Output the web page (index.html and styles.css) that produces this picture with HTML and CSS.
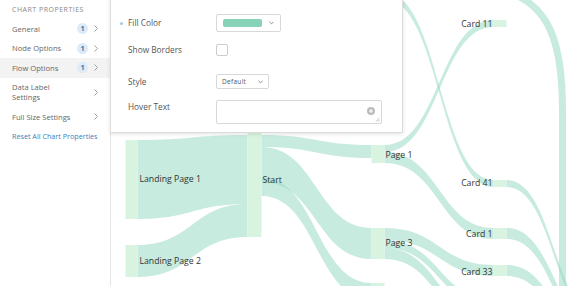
FILE: index.html
```html
<!DOCTYPE html>
<html lang="en">
<head>
    <meta charset="UTF-8">
    <title>Chart Properties</title>
    <link rel="stylesheet" href="styles.css">
</head>
<body>
    <div class="page">
        <div class="sidebar">
            <div class="sidebar-title">Chart Properties</div>
            <div class="side-row">
                <span class="side-label">General</span>
                <span class="badge">1</span>
                <svg class="chev" viewBox="0 0 4 7"><polyline points="0.5,0.5 3.5,3.5 0.5,6.5"/></svg>
            </div>
            <div class="side-row">
                <span class="side-label">Node Options</span>
                <span class="badge">1</span>
                <svg class="chev" viewBox="0 0 4 7"><polyline points="0.5,0.5 3.5,3.5 0.5,6.5"/></svg>
            </div>
            <div class="side-row active">
                <span class="side-label">Flow Options</span>
                <span class="badge">1</span>
                <svg class="chev" viewBox="0 0 4 7"><polyline points="0.5,0.5 3.5,3.5 0.5,6.5"/></svg>
            </div>
            <div class="side-row tall">
                <span class="side-label">Data Label<br>Settings</span>
                <svg class="chev" viewBox="0 0 4 7"><polyline points="0.5,0.5 3.5,3.5 0.5,6.5"/></svg>
            </div>
            <div class="side-row">
                <span class="side-label">Full Size Settings</span>
                <svg class="chev" viewBox="0 0 4 7"><polyline points="0.5,0.5 3.5,3.5 0.5,6.5"/></svg>
            </div>
            <a class="reset-link" href="#">Reset All Chart Properties</a>
        </div>

        <div class="chart">
            <svg class="sankey" viewBox="112 0 468 286">
                <g class="flows">
                    <!-- into Start -->
                    <path d="M138 140 C193 140 193 135 248 135 L248 204 C193 204 193 219 138 219 Z"/>
                    <path d="M138 245 C193 245 193 204 248 204 L248 237 C193 237 193 277 138 277 Z"/>
                    <!-- out of Start -->
                    <path d="M262 135 C317 135 317 145 372 145 L372 158 C317 158 317 147 262 147 Z"/>
                    <path d="M262 147 C317 147 317 228 372 228 L372 259 C317 259 317 182 262 182 Z"/>
                    <path d="M262 178 C317 178 317 283 372 283 L372 300 C317 300 317 196 262 196 Z"/>
                    <!-- out of Page 1 / hidden node -->
                    <path d="M385 145 C440 145 440 20 494 20 L494 27 C440 27 440 152 385 152 Z"/>
                    <path d="M385 -8 C440 -8 440 180 494 180 L494 187 C440 187 440 -1 385 -1 Z"/>
                    <path d="M385 152 C440 152 440 228 494 228 L494 239 C440 239 440 163 385 163 Z"/>
                    <!-- out of Page 3 -->
                    <path d="M385 228 C440 228 440 265 494 265 L494 276 C440 276 440 240 385 240 Z"/>
                    <path d="M385 240 C440 240 440 300 494 300 L494 308 C440 308 440 248 385 248 Z"/>
                    <path d="M385 248 C440 248 440 322 494 322 L494 333 C440 333 440 259 385 259 Z"/>
                    <!-- out of cards -->
                    <path d="M507 180 C555 180 555 320 603 320 L603 327 C555 327 555 187 507 187 Z"/>
                    <path d="M507 228 C555 228 555 330 603 330 L603 341 C555 341 555 239 507 239 Z"/>
                    <path d="M507 265 C555 265 555 342 603 342 L603 353 C555 353 555 276 507 276 Z"/>
                </g>
                <path class="loop" d="M514 -6 C548 8 563 40 563 110 L563 300"/>
                <g class="nodes">
                    <rect x="126" y="140" width="12" height="79"/>
                    <rect x="126" y="245" width="12" height="32"/>
                    <rect x="248" y="100" width="14" height="137"/>
                    <rect x="372" y="145" width="13" height="18"/>
                    <rect x="372" y="228" width="13" height="31"/>
                    <rect x="372" y="283" width="13" height="20"/>
                    <rect x="494" y="20" width="13" height="7"/>
                    <rect x="494" y="180" width="13" height="7"/>
                    <rect x="494" y="228" width="13" height="11"/>
                    <rect x="494" y="265" width="13" height="11"/>
                </g>
                <g class="labels">
                    <text x="140" y="182">Landing Page 1</text>
                    <text x="140" y="264">Landing Page 2</text>
                    <text x="263" y="183">Start</text>
                    <text x="386" y="158">Page 1</text>
                    <text x="386" y="246">Page 3</text>
                    <text x="493" y="27" class="end">Card 11</text>
                    <text x="493" y="186" class="end">Card 41</text>
                    <text x="493" y="237" class="end">Card 1</text>
                    <text x="493" y="275" class="end">Card 33</text>
                </g>
            </svg>
        </div>

        <div class="flow-popup">
            <div class="form-row row-fill">
                <span class="form-label"><span class="dot"></span>Fill Color</span>
                <div class="select color-select">
                    <span class="swatch"></span>
                    <svg class="caret" viewBox="0 0 6 4"><polyline points="0.5,0.5 3,3 5.5,0.5"/></svg>
                </div>
            </div>
            <div class="form-row row-borders">
                <span class="form-label">Show Borders</span>
                <span class="checkbox"></span>
            </div>
            <div class="form-row row-style">
                <span class="form-label">Style</span>
                <div class="select style-select">
                    <span class="select-text">Default</span>
                    <svg class="caret" viewBox="0 0 6 4"><polyline points="0.5,0.5 3,3 5.5,0.5"/></svg>
                </div>
            </div>
            <div class="form-row row-hover">
                <span class="form-label">Hover Text</span>
                <div class="textarea">
                    <svg class="add-icon" viewBox="0 0 10 10">
                        <circle cx="5" cy="5" r="5"/>
                        <path d="M5 2.5 V7.5 M2.5 5 H7.5"/>
                    </svg>
                    <svg class="grip" viewBox="0 0 5 5"><path d="M1 4.5 L4.5 1 M3 4.5 L4.5 3"/></svg>
                </div>
            </div>
        </div>
    </div>
</body>
</html>
```

FILE: styles.css
```css
body {
    margin: 0;
    font-family: "Open Sans", Arial, sans-serif;
    background-color: #fff;
}
.page {
    position: relative;
    display: flex;
    width: 580px;
    height: 286px;
    overflow: hidden;
}
.sidebar {
    width: 111px;
    flex-shrink: 0;
    border-right: 1px solid #e4e4e4;
    box-sizing: border-box;
}
.sidebar-title {
    padding: 4px 12px 3px;
    line-height: 12px;
    font-size: 7px;
    letter-spacing: 0.5px;
    text-transform: uppercase;
    color: #888;
}
.side-row {
    display: flex;
    align-items: center;
    height: 19.5px;
    padding: 0 12px;
    font-size: 7.6px;
    color: #666;
}
.side-row.active {
    background-color: #f3f3f3;
}
.side-row.tall {
    height: 29.5px;
    line-height: 10px;
}
.side-label {
    flex: 1;
}
.badge {
    width: 11px;
    height: 11px;
    border-radius: 50%;
    background-color: #dcebf8;
    color: #2c6ca8;
    font-size: 6.5px;
    font-weight: bold;
    line-height: 11px;
    text-align: center;
    margin-right: 6px;
}
.chev {
    width: 4px;
    height: 7px;
    fill: none;
    stroke: #999;
    stroke-width: 0.9;
}
.reset-link {
    display: block;
    padding: 0 0 0 12px;
    line-height: 19.5px;
    font-size: 7.2px;
    white-space: nowrap;
    color: #3b7fc0;
    text-decoration: none;
}
.chart {
    flex: 1;
}
.sankey {
    display: block;
    width: 469px;
    height: 286px;
}
.flows path {
    fill: #8fd8bd;
    opacity: 0.5;
}
.loop {
    fill: none;
    stroke: #8fd8bd;
    stroke-opacity: 0.5;
    stroke-width: 7;
}
.nodes rect {
    fill: #d9f3e1;
}
.labels text {
    font-family: "Open Sans", Arial, sans-serif;
    font-size: 8.7px;
    fill: #333;
}
.labels text.end {
    text-anchor: end;
}
.flow-popup {
    position: absolute;
    left: 110px;
    top: -1px;
    width: 293px;
    height: 134px;
    box-sizing: border-box;
    padding: 14px 0 0 17px;
    background-color: #fff;
    border: 1px solid #ddd;
    box-shadow: 0 1px 4px rgba(0, 0, 0, 0.12);
}
.form-row {
    display: flex;
    align-items: center;
}
.row-fill {
    height: 18px;
}
.row-borders {
    height: 12px;
    margin-top: 12px;
}
.row-style {
    height: 15px;
    margin-top: 18px;
}
.row-hover {
    align-items: flex-start;
    margin-top: 11px;
}
.form-label {
    position: relative;
    width: 88px;
    font-size: 8.3px;
    line-height: 14px;
    color: #555;
}
.dot {
    position: absolute;
    left: -8px;
    top: 6px;
    width: 3px;
    height: 3px;
    border-radius: 50%;
    background-color: #9ccbec;
}
.select {
    display: flex;
    align-items: center;
    box-sizing: border-box;
    border: 1px solid #d8d8d8;
    border-radius: 2px;
    background-color: #fff;
}
.color-select {
    width: 65px;
    height: 18px;
    padding: 0 6px;
}
.swatch {
    width: 39px;
    height: 8px;
    border-radius: 2px;
    background-color: #86d3b8;
    margin-right: 7px;
}
.caret {
    width: 5px;
    height: 4px;
    fill: none;
    stroke: #777;
    stroke-width: 1;
}
.style-select {
    width: 53px;
    height: 15px;
    padding: 0 5px;
}
.select-text {
    flex: 1;
    font-size: 6.5px;
    letter-spacing: 0.3px;
    color: #555;
}
.checkbox {
    width: 12px;
    height: 12px;
    box-sizing: border-box;
    border: 1px solid #ccc;
    border-radius: 2px;
}
.textarea {
    position: relative;
    width: 166px;
    height: 24px;
    box-sizing: border-box;
    border: 1px solid #d8d8d8;
    border-radius: 2px;
}
.add-icon {
    position: absolute;
    right: 6px;
    top: 6px;
    width: 8px;
    height: 8px;
}
.add-icon circle {
    fill: #bbb;
}
.add-icon path {
    stroke: #fff;
    stroke-width: 1.4;
}
.grip {
    position: absolute;
    right: 1px;
    bottom: 1px;
    width: 5px;
    height: 5px;
    fill: none;
    stroke: #999;
    stroke-width: 0.6;
}
```
